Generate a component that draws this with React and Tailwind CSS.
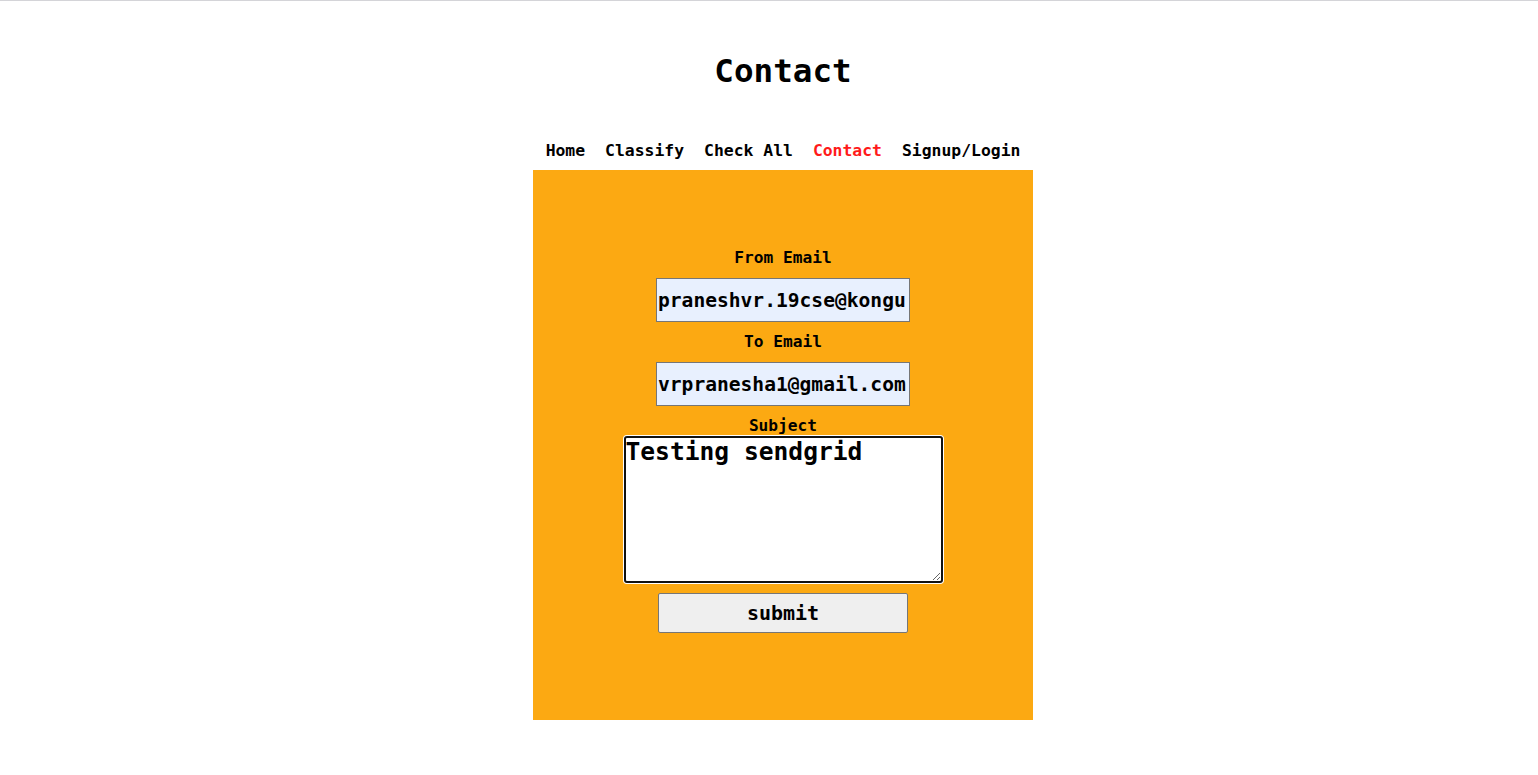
import { useState } from "react";

const mono = "font-['DejaVu_Sans_Mono',monospace]";

function App() {
  const [from, setFrom] = useState("praneshvr.19cse@kongu.edu");
  const [to, setTo] = useState("vrpranesha1@gmail.com");
  const [subject, setSubject] = useState("Testing sendgrid");

  const links = ["Home", "Classify", "Check All", "Contact", "Signup/Login"];

  return (
    <div className={`min-h-screen bg-white border-t border-[#d4d4d8] ${mono} text-black`}>
      <div className="flex flex-col items-center pl-[28px] pb-[55px]">
        {/* Title */}
        <h1 className="mt-[51px] text-[32.6px] leading-[38px] font-bold">Contact</h1>

        {/* Nav */}
        <nav className="mt-[51px] flex gap-[20px] text-[16.4px] leading-[20px] font-bold">
          {links.map((l) => (
            <a key={l} href="#" className={l === "Contact" ? "text-[#ff1a1a]" : "text-black"}>
              {l}
            </a>
          ))}
        </nav>

        {/* Form panel */}
        <div className="mt-[9px] w-[500px] h-[550px] bg-[#fca912] flex flex-col items-center pt-[78px]">
          <form onSubmit={(e) => e.preventDefault()} className="flex flex-col items-center">
            <label className="text-[16.2px] leading-[20px] font-bold">From Email</label>
            <input
              value={from}
              onChange={(e) => setFrom(e.target.value)}
              className="mt-[10px] w-[254px] h-[44px] px-[1px] bg-[#e8f0fe] border border-[#767676] text-[19.6px] font-bold outline-none"
            />

            <label className="mt-[10px] text-[16.2px] leading-[20px] font-bold">To Email</label>
            <input
              value={to}
              onChange={(e) => setTo(e.target.value)}
              className="mt-[10px] w-[254px] h-[44px] px-[1px] bg-[#e8f0fe] border border-[#767676] text-[19.6px] font-bold outline-none"
            />

            <label className="mt-[10px] text-[16.2px] leading-[20px] font-bold">Subject</label>
            <textarea
              value={subject}
              onChange={(e) => setSubject(e.target.value)}
              spellCheck={false}
              className="w-[319px] h-[147px] bg-white border-2 border-[#111] rounded-[3px] shadow-[0_0_0_1px_#fff] text-[24.6px] leading-[28px] font-bold outline-none"
            />

            <button
              type="submit"
              className="mt-[10px] w-[250px] h-[40px] bg-[#efefef] border border-[#767676] rounded-[2px] text-[20px] font-bold"
            >
              submit
            </button>
          </form>
        </div>
      </div>
    </div>
  );
}

export default App;
